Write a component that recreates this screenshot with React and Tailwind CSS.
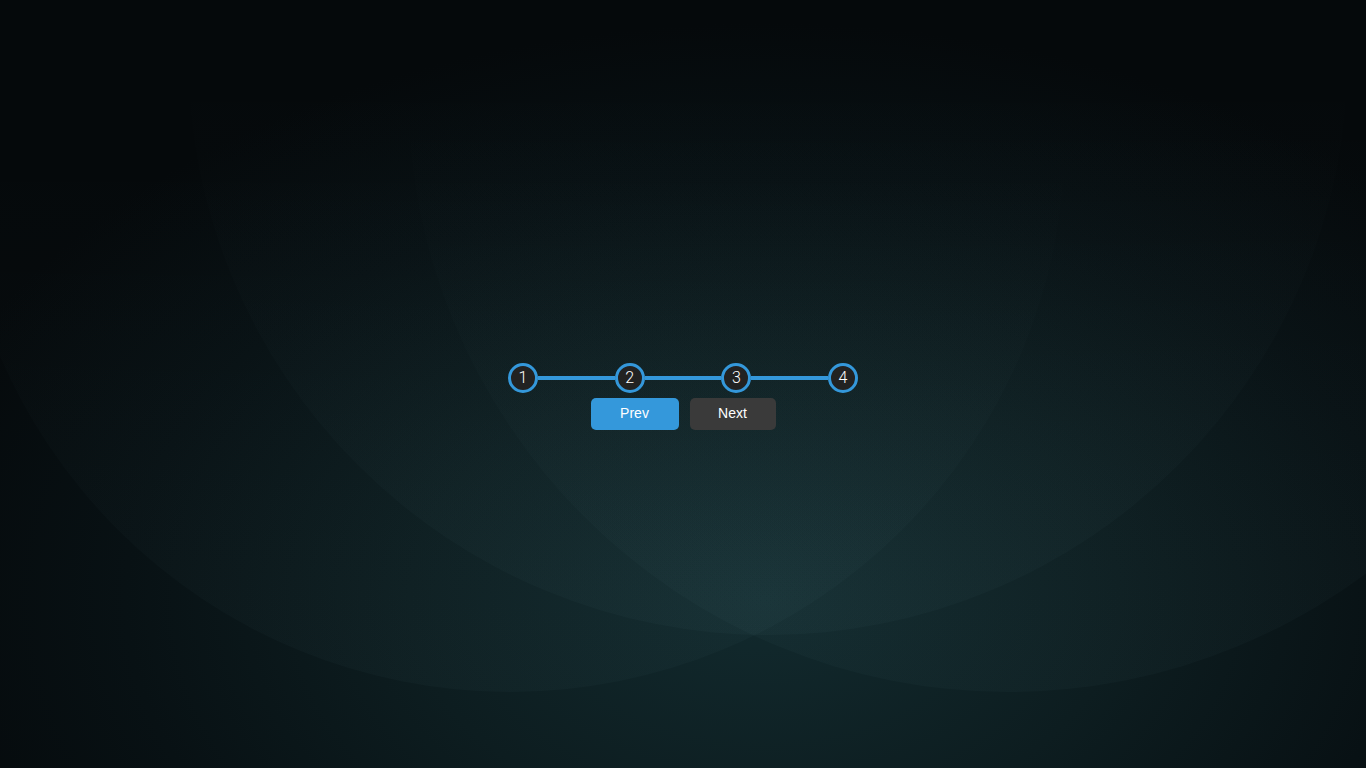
import React from "react";

function Step({ n }) {
  return (
    <div
      className="flex h-[30px] w-[30px] shrink-0 items-center justify-center rounded-full border-[3px] border-[#3498db] bg-[#222222] text-[16px] font-light leading-none text-white"
      style={{ fontFamily: 'Roboto, "Liberation Sans", sans-serif' }}
    >
      {n}
    </div>
  );
}

export default function App() {
  return (
    <div
      className="relative flex h-screen w-full items-center justify-center overflow-hidden bg-[radial-gradient(ellipse_65%_75%_at_56%_78%,#122a2e_0%,#0d1d20_40%,#081114_72%,#05090b_100%)] pt-6"
      style={{ fontFamily: '"Liberation Sans", Arial, sans-serif' }}
    >
      {/* decorative translucent circles */}
      <div className="pointer-events-none absolute left-[-45px] top-[-418px] h-[1110px] w-[1110px] rounded-full bg-gradient-to-b from-transparent from-50% to-[#9fe0ea]/[0.025]" />
      <div className="pointer-events-none absolute left-[408px] top-[-508px] h-[1200px] w-[1200px] rounded-full bg-gradient-to-b from-transparent from-50% to-[#9fe0ea]/[0.025]" />
      <div className="pointer-events-none absolute left-[188px] top-[-525px] h-[1160px] w-[1160px] rounded-full bg-gradient-to-b from-transparent from-50% to-[#9fe0ea]/[0.025]" />

      <div className="relative flex flex-col items-center gap-[5px]">
        <div className="flex w-[350px] items-center">
          <Step n={1} />
          <div className="h-[4px] flex-1 bg-[#3498db]" />
          <Step n={2} />
          <div className="h-[4px] flex-1 bg-[#3498db]" />
          <Step n={3} />
          <div className="h-[4px] flex-1 bg-[#3498db]" />
          <Step n={4} />
        </div>
        <div className="flex items-center gap-[11px]">
          <button className="h-[32px] w-[88px] rounded-[5px] bg-[#3498db] text-[14px] text-white">
            Prev
          </button>
          <button className="h-[32px] w-[86px] rounded-[5px] bg-[#3a3a3a] text-[14px] text-white">
            Next
          </button>
        </div>
      </div>
    </div>
  );
}
